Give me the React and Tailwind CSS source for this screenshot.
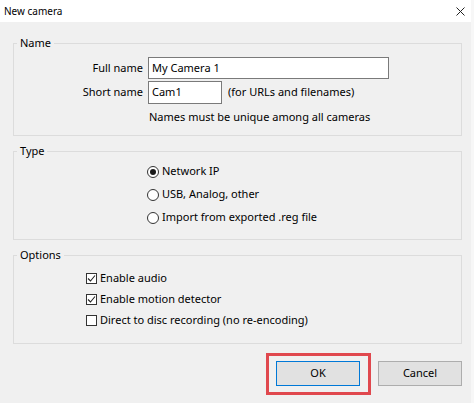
import React, { useState } from "react";

const font = { fontFamily: '"Segoe UI", "Noto Sans", "Open Sans", sans-serif' };

const Radio = ({ checked, label, onClick }) => (
  <div className="flex items-center h-[23px] cursor-default" onClick={onClick}>
    <span className="w-[12px] h-[12px] rounded-full border border-[#333] bg-white flex items-center justify-center">
      {checked && <span className="w-[6px] h-[6px] rounded-full bg-[#1a1a1a]" />}
    </span>
    <span className="ml-[3px]">{label}</span>
  </div>
);

const Check = ({ checked, label, onClick }) => (
  <div className="flex items-center h-[21px] cursor-default" onClick={onClick}>
    <span className="w-[11px] h-[11px] border border-[#333] bg-white flex items-center justify-center">
      {checked && (
        <svg width="9" height="9" viewBox="0 0 9 9">
          <path d="M1 4.5 L3.5 7 L8 1.5" fill="none" stroke="#222" strokeWidth="1.1" />
        </svg>
      )}
    </span>
    <span className="ml-[3px]">{label}</span>
  </div>
);

const Group = ({ title, className, children }) => (
  <fieldset className={`border border-[#dcdcdc] ${className}`}>
    <legend className="ml-[3px] px-[3px] leading-[16px]">{title}</legend>
    {children}
  </fieldset>
);

export default function App() {
  const [type, setType] = useState("ip");
  const [opts, setOpts] = useState({ audio: true, motion: true, direct: false });
  const toggle = (k) => setOpts((o) => ({ ...o, [k]: !o[k] }));

  return (
    <div style={font} className="w-[474px] h-[403px] bg-[#f0f0f0] text-[11px] text-black overflow-hidden flex flex-col border-r-[3px] border-[#f7f7f7]">
      {/* title bar */}
      <div className="h-[22px] bg-white flex items-center justify-between pl-[4px] pr-[6px] shrink-0 text-[10px]">
        <span>New camera</span>
        <svg width="9" height="9" viewBox="0 0 9 9">
          <path d="M0.5 0.5 L8.5 8.5 M8.5 0.5 L0.5 8.5" stroke="#222" strokeWidth="1" />
        </svg>
      </div>

      <div className="pl-[13px] pr-[9px] pt-[13px] flex flex-col">
        <Group title="Name" className="pt-[6px] pb-[10px]">
          <div className="flex items-center">
            <span className="w-[129px] text-right">Full name</span>
            <div className="ml-[5px] w-[241px] h-[22px] bg-white border border-[#7a7a7a] flex items-center pl-[3px]">
              My Camera 1
            </div>
          </div>
          <div className="flex items-center mt-[2px]">
            <span className="w-[129px] text-right">Short name</span>
            <div className="ml-[5px] w-[74px] h-[23px] bg-white border border-[#7a7a7a] flex items-center pl-[3px]">
              Cam1
            </div>
            <span className="ml-[6px]">(for URLs and filenames)</span>
          </div>
          <div className="pl-[135px] mt-[5px] leading-[16px]">Names must be unique among all cameras</div>
        </Group>

        <Group title="Type" className="mt-[7px] pt-[1px] pb-[10px]">
          <div className="pl-[133px]">
            <Radio checked={type === "ip"} label="Network IP" onClick={() => setType("ip")} />
            <Radio checked={type === "usb"} label="USB, Analog, other" onClick={() => setType("usb")} />
            <Radio checked={type === "reg"} label="Import from exported .reg file" onClick={() => setType("reg")} />
          </div>
        </Group>

        <Group title="Options" className="mt-[7px] pt-[5px] pb-[12px]">
          <div className="pl-[72px]">
            <Check checked={opts.audio} label="Enable audio" onClick={() => toggle("audio")} />
            <Check checked={opts.motion} label="Enable motion detector" onClick={() => toggle("motion")} />
            <Check checked={opts.direct} label="Direct to disc recording (no re-encoding)" onClick={() => toggle("direct")} />
          </div>
        </Group>

        <div className="mt-[17px] flex justify-end gap-[18px]">
          <div className="relative">
            <button className="w-[84px] h-[25px] bg-[#e1e1e1] border border-[#0078d7]">OK</button>
            <span className="absolute -left-[10px] -right-[11px] -top-[8px] -bottom-[9px] border-[3px] border-[#e0484e] pointer-events-none" />
          </div>
          <button className="w-[84px] h-[25px] bg-[#e1e1e1] border border-[#adadad]">Cancel</button>
        </div>
      </div>
    </div>
  );
}
